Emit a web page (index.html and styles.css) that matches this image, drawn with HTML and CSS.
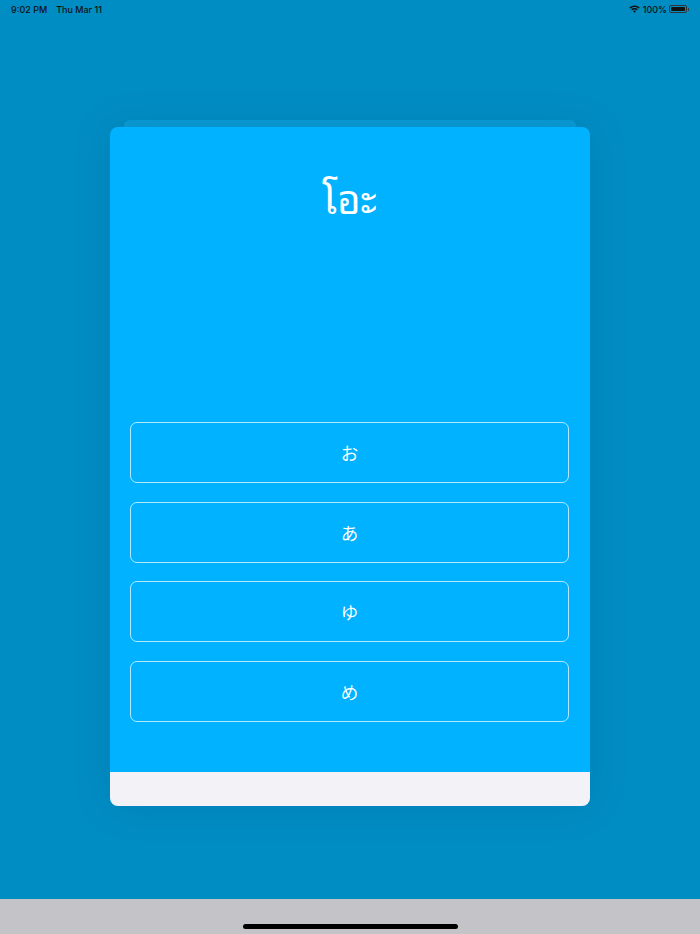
FILE: index.html
```html
<!DOCTYPE html>
<html lang="th">
<head>
<meta charset="utf-8">
<title>โอะ</title>
<link rel="stylesheet" href="styles.css">
</head>
<body>
<div class="screen">
  <div class="status-bar">
    <div class="status-left">
      <span class="time">9:02 PM</span>
      <span class="date">Thu Mar 11</span>
    </div>
    <div class="status-right">
      <svg class="wifi" width="11" height="8" viewBox="0 0 11 8">
        <path d="M5.5 0.6C3.4 0.6 1.6 1.4 0.3 2.7L1.2 3.6C2.3 2.5 3.8 1.9 5.5 1.9C7.2 1.9 8.7 2.5 9.8 3.6L10.7 2.7C9.4 1.4 7.6 0.6 5.5 0.6Z" fill="#111"/>
        <path d="M5.5 3.1C4.2 3.1 3.1 3.6 2.2 4.4L3.1 5.3C3.7 4.7 4.6 4.4 5.5 4.4C6.4 4.4 7.3 4.7 7.9 5.3L8.8 4.4C7.9 3.6 6.8 3.1 5.5 3.1Z" fill="#111"/>
        <path d="M5.5 5.6C4.9 5.6 4.4 5.8 4.0 6.2L5.5 7.7L7.0 6.2C6.6 5.8 6.1 5.6 5.5 5.6Z" fill="#111"/>
      </svg>
      <span class="battery-pct">100%</span>
      <span class="battery"><span class="battery-fill"></span></span>
      <span class="battery-nub"></span>
    </div>
  </div>

  <div class="stage">
    <div class="card-peek"></div>
    <div class="card">
      <div class="card-body">
        <h1 class="question">โอะ</h1>
        <div class="answers">
          <button class="answer">お</button>
          <button class="answer">あ</button>
          <button class="answer">ゆ</button>
          <button class="answer">め</button>
        </div>
      </div>
      <div class="card-footer"></div>
    </div>
  </div>

  <div class="home-area">
    <div class="home-indicator"></div>
  </div>
</div>
</body>
</html>
```

FILE: styles.css
```css
* {
  box-sizing: border-box;
}

html, body {
  margin: 0;
  padding: 0;
  background: #008dc4;
}

.screen {
  width: 700px;
  height: 934px;
  display: flex;
  flex-direction: column;
  background: #008dc4;
  font-family: "Liberation Sans", Arial, sans-serif;
  overflow: hidden;
}

.status-bar {
  height: 18px;
  display: flex;
  align-items: center;
  justify-content: space-between;
  padding: 0 11px 0 11px;
  font-size: 9px;
  color: #111;
  font-family: Inter, "Liberation Sans", sans-serif;
  font-weight: 500;
}

.status-left {
  display: flex;
  gap: 9px;
}

.status-right {
  display: flex;
  align-items: center;
}

.wifi {
  margin-right: 3px;
}

.battery-pct {
  margin-right: 2px;
}

.battery {
  width: 18px;
  height: 8px;
  border: 1px solid #333;
  border-radius: 2px;
  padding: 1px;
  display: flex;
}

.battery-fill {
  flex: 1;
  background: #111;
  border-radius: 1px;
}

.battery-nub {
  width: 1.5px;
  height: 3px;
  background: #333;
  border-radius: 0 1px 1px 0;
  margin-left: 0.5px;
}

.stage {
  flex: 1;
  display: flex;
  flex-direction: column;
  align-items: center;
  padding-top: 102px;
}

.card-peek {
  width: 452px;
  height: 7px;
  background: #0a9bd4;
  border-radius: 6px 6px 0 0;
}

.card {
  width: 480px;
  height: 679px;
  background: #00b2ff;
  border-radius: 8px;
  display: flex;
  flex-direction: column;
  overflow: hidden;
  box-shadow: 0 0 40px rgba(0, 40, 70, 0.12);
}

.card-body {
  flex: 1;
  padding: 47px 21px 0 20px;
  display: flex;
  flex-direction: column;
}

.question {
  margin: 0;
  height: 44px;
  line-height: 44px;
  text-align: center;
  color: #ffffff;
  font-size: 40px;
  font-weight: 400;
  font-family: "Noto Sans Thai Looped", "Loma", "Garuda", "Kinnari", "Norasi", "Noto Serif Thai", "Noto Sans Thai", "DejaVu Sans", sans-serif;
}

.answers {
  margin-top: 204px;
  display: flex;
  flex-direction: column;
  gap: 18.5px;
}

.answer {
  height: 61px;
  width: 100%;
  background: transparent;
  border: 1px solid rgba(255, 255, 255, 0.7);
  border-radius: 7px;
  color: #ffffff;
  font-size: 17.5px;
  font-family: "Noto Sans CJK JP", sans-serif;
  padding: 0;
  margin: 0;
}

.card-footer {
  height: 34px;
  background: #f2f2f7;
}

.home-area {
  height: 35px;
  background: #c4c3c8;
  display: flex;
  justify-content: center;
  padding-top: 25px;
}

.home-indicator {
  width: 215px;
  height: 5px;
  background: #000;
  border-radius: 3px;
}
```
